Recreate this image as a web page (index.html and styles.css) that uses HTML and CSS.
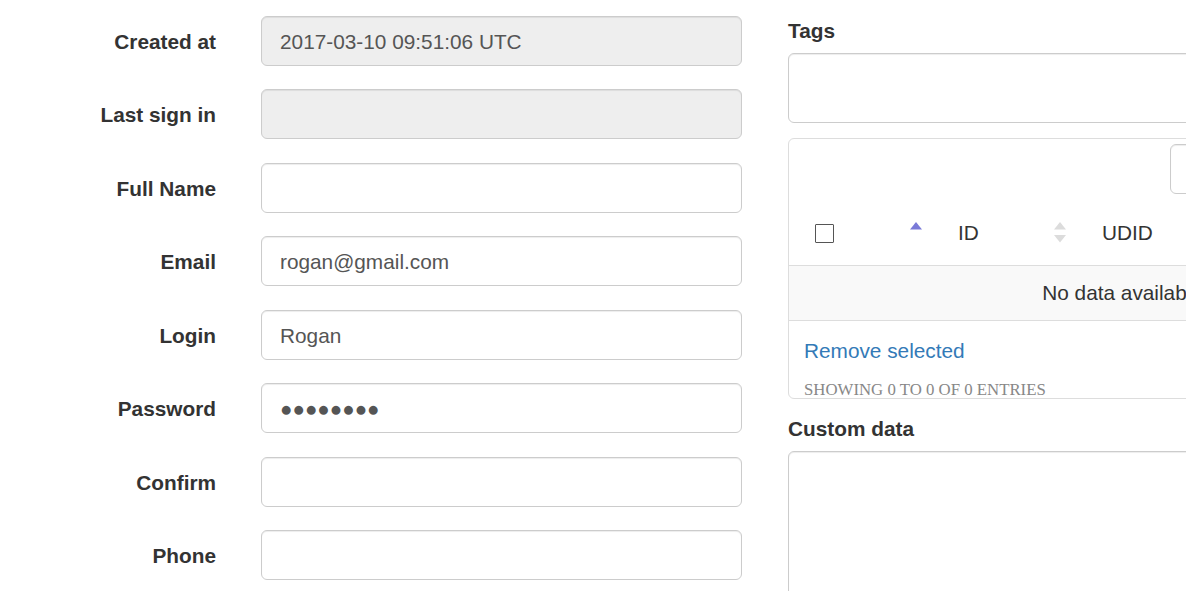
FILE: index.html
```html
<!DOCTYPE html>
<html lang="en">
<head>
<meta charset="utf-8">
<title>User</title>
<link rel="stylesheet" href="styles.css">
</head>
<body>
<div class="page">
  <form class="form-col">
    <label class="lbl">Created at</label>
    <input class="ctl ro" type="text" value="2017-03-10 09:51:06 UTC" readonly>
    <label class="lbl">Last sign in</label>
    <input class="ctl ro" type="text" value="" readonly>
    <label class="lbl">Full Name</label>
    <input class="ctl" type="text" value="">
    <label class="lbl">Email</label>
    <input class="ctl" type="text" value="rogan@gmail.com">
    <label class="lbl">Login</label>
    <input class="ctl" type="text" value="Rogan">
    <label class="lbl">Password</label>
    <input class="ctl pw" type="text" value="●●●●●●●●">
    <label class="lbl">Confirm</label>
    <input class="ctl" type="password" value="">
    <label class="lbl">Phone</label>
    <input class="ctl" type="text" value="">
  </form>

  <div class="side-col">
    <h4 class="sec-title">Tags</h4>
    <div class="tags-box"></div>

    <div class="panel">
      <div class="search-row">
        <input class="search" type="search">
      </div>
      <div class="thead">
        <div class="th th-check">
          <span class="checkbox"></span>
          <svg class="sort" width="12" height="22" viewBox="0 0 12 22"><path d="M6 1 L12 8.5 L0 8.5 Z" fill="#7a7ad8"/></svg>
        </div>
        <div class="th th-id">
          <span>ID</span>
          <svg class="sort" width="12" height="22" viewBox="0 0 12 22"><path d="M6 1 L12 8.5 L0 8.5 Z" fill="#dcdcdc"/><path d="M6 21.5 L12 14 L0 14 Z" fill="#dcdcdc"/></svg>
        </div>
        <div class="th th-udid"><span>UDID</span></div>
      </div>
      <div class="empty-row">No data available in table</div>
      <a class="remove" href="#">Remove selected</a>
      <div class="info">Showing 0 to 0 of 0 entries</div>
    </div>

    <h4 class="sec-title custom">Custom data</h4>
    <textarea class="custom-box"></textarea>
  </div>
</div>
</body>
</html>
```

FILE: styles.css
```css
html, body {
  margin: 0;
  padding: 0;
  background: #fff;
  overflow: hidden;
}

body {
  font-family: "Liberation Sans", Arial, sans-serif;
  font-size: 20.8px;
  color: #333;
  width: 1186px;
  height: 591px;
}

.page {
  display: flex;
  align-items: flex-start;
}

.form-col {
  flex: 0 0 788px;
  display: grid;
  grid-template-columns: 216px 481px;
  grid-auto-rows: 50px;
  column-gap: 45px;
  row-gap: 23.43px;
  padding-top: 16px;
  margin: 0;
}

.lbl {
  display: flex;
  align-items: center;
  justify-content: flex-end;
  padding-top: 2px;
  font-weight: bold;
  font-size: 20.8px;
  color: #333;
}

.ctl {
  box-sizing: border-box;
  width: 481px;
  height: 50px;
  margin: 0;
  padding: 2px 18px 0;
  border: 1px solid #ccc;
  border-radius: 6px;
  background: #fff;
  box-shadow: inset 0 1px 1px rgba(0, 0, 0, 0.075);
  font-family: "Liberation Sans", Arial, sans-serif;
  font-size: 20.8px;
  color: #555;
  outline: none;
}

.ctl.pw {
  font-size: 20.6px;
}

.ctl.ro {
  background: #eee;
}

.side-col {
  flex: 0 0 742px;
  display: flex;
  flex-direction: column;
}

.sec-title {
  margin: 17px 0 0;
  font-size: 20.8px;
  line-height: 28px;
  font-weight: bold;
  color: #333;
}

.sec-title.custom {
  margin-top: 16px;
}

.tags-box {
  box-sizing: border-box;
  height: 70px;
  margin-top: 8px;
  border: 1px solid #ccc;
  border-radius: 6px;
  box-shadow: inset 0 1px 1px rgba(0, 0, 0, 0.075);
}

.panel {
  box-sizing: border-box;
  height: 261px;
  margin-top: 15px;
  border: 1px solid #ddd;
  border-radius: 6px;
  overflow: hidden;
  display: flex;
  flex-direction: column;
}

.search-row {
  display: flex;
  flex-shrink: 0;
  padding-top: 5px;
}

.search {
  box-sizing: border-box;
  width: 280px;
  height: 50px;
  margin: 0 0 0 381px;
  border: 1px solid #ccc;
  border-radius: 6px;
  background: #fff;
  box-shadow: inset 0 1px 1px rgba(0, 0, 0, 0.075);
  font-family: "Liberation Sans", Arial, sans-serif;
  font-size: 20.8px;
  outline: none;
}

.thead {
  display: flex;
  flex-shrink: 0;
  height: 66px;
  margin-top: 6px;
  padding-top: 1px;
  box-sizing: border-box;
  border-bottom: 1px solid #ddd;
}

.th {
  box-sizing: border-box;
  display: flex;
  align-items: center;
  justify-content: space-between;
  font-size: 20.8px;
  color: #333;
}

.th-check {
  width: 149px;
  padding: 0 16px 0 26px;
}

.th-id {
  width: 142px;
  padding: 0 14px 0 20px;
}

.th-udid {
  padding-left: 22px;
}

.sort {
  display: block;
  margin-top: -2px;
}

.checkbox {
  display: block;
  width: 17px;
  height: 17px;
  border: 1px solid #555;
  border-radius: 1px;
  background: #fff;
}

.empty-row {
  box-sizing: border-box;
  height: 55px;
  flex-shrink: 0;
  background: #f9f9f9;
  border-bottom: 1px solid #ddd;
  display: flex;
  align-items: center;
  justify-content: center;
  font-size: 20.8px;
  color: #333;
}

.remove {
  align-self: flex-start;
  margin: 16px 0 0 15px;
  font-size: 20.8px;
  line-height: 28px;
  color: #337ab7;
  text-decoration: none;
}

.info {
  margin: 15px 0 0 15px;
  font-family: "Liberation Serif", "Times New Roman", serif;
  font-size: 16.8px;
  line-height: 20px;
  text-transform: uppercase;
  color: #888;
  white-space: nowrap;
}

.custom-box {
  box-sizing: border-box;
  height: 220px;
  margin: 8px 0 0;
  border: 1px solid #ccc;
  border-radius: 6px;
  box-shadow: inset 0 1px 1px rgba(0, 0, 0, 0.075);
  resize: none;
  outline: none;
}
```
